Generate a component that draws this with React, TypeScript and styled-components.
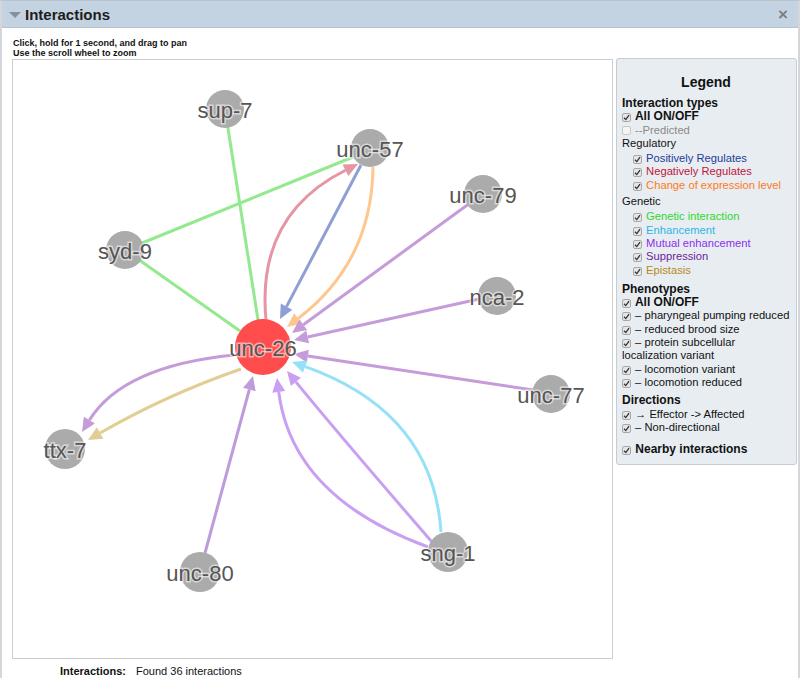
import React from 'react'
import styled, { createGlobalStyle } from 'styled-components'

const GlobalStyle = createGlobalStyle`
  body {
    margin: 0;
    font-family: 'Liberation Sans', Arial, sans-serif;
    color: #111;
  }
`

type Pt = [number, number]

interface GraphNode {
  id: string
  at: Pt
  r: number
  fill: string
}

interface GraphEdge {
  from: Pt
  to: Pt
  ctrl?: Pt
  color: string
  arrow?: boolean
}

const nodes: GraphNode[] = [
  { id: 'sup-7', at: [225, 109], r: 19, fill: '#ababab' },
  { id: 'unc-57', at: [370, 148], r: 19, fill: '#ababab' },
  { id: 'unc-79', at: [483, 194], r: 19, fill: '#ababab' },
  { id: 'syd-9', at: [125, 250], r: 19, fill: '#ababab' },
  { id: 'nca-2', at: [497, 296], r: 19, fill: '#ababab' },
  { id: 'unc-77', at: [551, 394], r: 19, fill: '#ababab' },
  { id: 'ttx-7', at: [65, 449], r: 20, fill: '#ababab' },
  { id: 'unc-80', at: [200, 572], r: 20, fill: '#ababab' },
  { id: 'sng-1', at: [448, 552], r: 20, fill: '#ababab' },
  { id: 'unc-26', at: [263, 347], r: 28, fill: '#ff4d4d' }
]

const edges: GraphEdge[] = [
  { from: [225, 109], to: [258, 320], color: '#93e98d' },
  { from: [125, 250], to: [240, 331], color: '#93e98d' },
  { from: [125, 250], to: [353, 157], color: '#93e98d' },
  { from: [266, 320], to: [358, 164], ctrl: [256, 215], color: '#e596a4', arrow: true },
  { from: [361, 165], to: [280, 319], color: '#8e9fd4', arrow: true },
  { from: [373, 167], to: [287, 327], ctrl: [372, 262], color: '#ffc68d', arrow: true },
  { from: [470, 203], to: [292, 333], color: '#c59cd9', arrow: true },
  { from: [479, 299], to: [294, 340], color: '#c59cd9', arrow: true },
  { from: [533, 390], to: [294, 354], color: '#c59cd9', arrow: true },
  { from: [441, 532], to: [292, 362], ctrl: [433, 412], color: '#95e1f7', arrow: true },
  { from: [432, 542], to: [287, 371], ctrl: [341, 437], color: '#c99ff2', arrow: true },
  { from: [428, 547], to: [277, 378], ctrl: [292, 497], color: '#c99ff2', arrow: true },
  { from: [205, 553], to: [253, 376], color: '#bd9cdb', arrow: true },
  { from: [234, 355], to: [82, 432], ctrl: [123, 366], color: '#c59cd9', arrow: true },
  { from: [241, 369], to: [88, 440], ctrl: [166, 395], color: '#e2cd92', arrow: true }
]

const arrowHead = (e: GraphEdge) => {
  const back = e.ctrl ?? e.from
  const dx = e.to[0] - back[0]
  const dy = e.to[1] - back[1]
  const len = Math.hypot(dx, dy)
  const ux = dx / len
  const uy = dy / len
  const bx = e.to[0] - ux * 14
  const by = e.to[1] - uy * 14
  const w = 6.5
  return {
    base: [bx, by] as Pt,
    points: `${e.to[0]},${e.to[1]} ${bx - uy * w},${by + ux * w} ${bx + uy * w},${by - ux * w}`
  }
}

const Graph = () => (
  <GraphSvg viewBox='13 60 599 598' width={599} height={598}>
    {edges.map((e, i) => {
      const head = e.arrow ? arrowHead(e) : null
      const end = head ? head.base : e.to
      const d = e.ctrl
        ? `M${e.from[0]},${e.from[1]} Q${e.ctrl[0]},${e.ctrl[1]} ${end[0]},${end[1]}`
        : `M${e.from[0]},${e.from[1]} L${end[0]},${end[1]}`
      return (
        <g key={i}>
          <path d={d} fill='none' stroke={e.color} strokeWidth={3} />
          {head && <polygon points={head.points} fill={e.color} />}
        </g>
      )
    })}
    {nodes.map(n => (
      <circle key={n.id} cx={n.at[0]} cy={n.at[1]} r={n.r} fill={n.fill} />
    ))}
    {nodes.map(n => (
      <NodeLabel
        key={n.id}
        x={n.at[0]}
        y={n.at[1] + 1}
        textAnchor='middle'
        dominantBaseline='central'
      >
        {n.id}
      </NodeLabel>
    ))}
  </GraphSvg>
)

const Check = ({ off }: { off?: boolean }) => (
  <CheckBox off={off}>
    {!off && (
      <svg width='7' height='7' viewBox='0 0 7 7'>
        <path d='M1 3.8 L2.8 5.6 L6 1.2' fill='none' stroke='#333' strokeWidth='1.3' />
      </svg>
    )}
  </CheckBox>
)

export default function App() {
  return (
    <>
      <GlobalStyle />
      <Panel>
        <Header>
          <Caret />
          <Title>Interactions</Title>
          <Close>×</Close>
        </Header>
        <Body>
          <Hint>
            Click, hold for 1 second, and drag to pan
            <br />
            Use the scroll wheel to zoom
          </Hint>
          <Main>
            <GraphBox>
              <Graph />
            </GraphBox>
            <Legend>
              <LegendTitle>Legend</LegendTitle>
              <Heading gap={6}>Interaction types</Heading>
              <Row strong>
                <Check /> All ON/OFF
              </Row>
              <Row color='#8a8a8a'>
                <Check off /> --Predicted
              </Row>
              <Row>Regulatory</Row>
              <Group>
                <Row indent color='#1f3c99'>
                  <Check /> Positively Regulates
                </Row>
                <Row indent color='#c0163c'>
                  <Check /> Negatively Regulates
                </Row>
                <Row indent color='#ff7a22'>
                  <Check /> Change of expression level
                </Row>
              </Group>
              <Row gap={3}>Genetic</Row>
              <Group>
                <Row indent color='#2ed82e'>
                  <Check /> Genetic interaction
                </Row>
                <Row indent color='#2cb5ea'>
                  <Check /> Enhancement
                </Row>
                <Row indent color='#8b2ff0'>
                  <Check /> Mutual enhancement
                </Row>
                <Row indent color='#6c1e9c'>
                  <Check /> Suppression
                </Row>
                <Row indent color='#b5891a'>
                  <Check /> Epistasis
                </Row>
              </Group>
              <Heading gap={6}>Phenotypes</Heading>
              <Row strong>
                <Check /> All ON/OFF
              </Row>
              <Row>
                <Check /> – pharyngeal pumping reduced
              </Row>
              <Row>
                <Check /> – reduced brood size
              </Row>
              <Row>
                <Check /> – protein subcellular localization variant
              </Row>
              <Row>
                <Check /> – locomotion variant
              </Row>
              <Row>
                <Check /> – locomotion reduced
              </Row>
              <Heading gap={5}>Directions</Heading>
              <Row>
                <Check /> → Effector -&gt; Affected
              </Row>
              <Row>
                <Check /> – Non-directional
              </Row>
              <Row strong gap={9}>
                <Check /> Nearby interactions
              </Row>
            </Legend>
          </Main>
          <Footer>
            <FooterLabel>Interactions:</FooterLabel>
            <span>Found 36 interactions</span>
          </Footer>
          <FooterRule />
        </Body>
      </Panel>
    </>
  )
}

const Panel = styled.div`
  width: 800px;
  height: 678px;
  box-sizing: border-box;
  border-left: 2px solid #d3d6da;
  border-right: 2px solid #d3d6da;
  border-top: 1px solid #b9c3cc;
  overflow: hidden;
  background: #fff;
`

const Header = styled.div`
  height: 26px;
  display: flex;
  align-items: center;
  padding: 0 10px 0 7px;
  background: #c4d3e1;
  border-bottom: 1px solid #b3c2cf;
`

const Caret = styled.span`
  width: 0;
  height: 0;
  border-left: 6px solid transparent;
  border-right: 6px solid transparent;
  border-top: 6px solid #8a8f95;
  margin-right: 4px;
  margin-top: 2px;
`

const Title = styled.div`
  font-size: 15px;
  font-weight: bold;
  color: #1d1d1d;
  flex: 1;
`

const Close = styled.div`
  font-size: 17px;
  font-weight: bold;
  color: #7a7f85;
  line-height: 1;
`

const Body = styled.div`
  padding: 10px 0 0 10px;
`

const Hint = styled.div`
  font-size: 9px;
  font-weight: bold;
  line-height: 10px;
  padding-left: 1px;
  color: #111;
`

const Main = styled.div`
  display: flex;
  align-items: flex-start;
  gap: 3px;
`

const GraphBox = styled.div`
  width: 599px;
  height: 598px;
  margin-top: 1px;
  border: 1px solid #cdcdcd;
  background: #fff;
`

const GraphSvg = styled.svg`
  display: block;
`

const NodeLabel = styled.text`
  font-family: 'Liberation Sans', Arial, sans-serif;
  font-size: 22px;
  fill: #555;
  stroke: #fff;
  stroke-width: 3px;
  stroke-opacity: 0.55;
  paint-order: stroke;
`

const Legend = styled.div`
  width: 168px;
  height: 391px;
  padding: 14px 6px 0 5px;
  border: 1px solid #c6ccd2;
  border-radius: 3px;
  background: #e8edf1;
  font-size: 11px;
  color: #111;
`

const LegendTitle = styled.div`
  font-size: 14px;
  font-weight: bold;
  line-height: 18px;
  text-align: center;
`

const Heading = styled.div<{ gap?: number }>`
  font-size: 12px;
  font-weight: bold;
  line-height: 13.3px;
  margin-top: ${p => p.gap ?? 0}px;
`

const Group = styled.div`
  margin-top: 2px;
`

const Row = styled.div<{ indent?: boolean; strong?: boolean; gap?: number; color?: string }>`
  line-height: 13.3px;
  padding-left: ${p => (p.indent ? 11 : 0)}px;
  margin-top: ${p => p.gap ?? 0}px;
  font-weight: ${p => (p.strong ? 'bold' : 'normal')};
  font-size: ${p => (p.strong ? 12 : 11.2)}px;
  color: ${p => p.color ?? '#111'};
`

const CheckBox = styled.span<{ off?: boolean }>`
  display: inline-flex;
  align-items: center;
  justify-content: center;
  box-sizing: border-box;
  width: 9px;
  height: 9px;
  margin-right: 1px;
  vertical-align: -1px;
  border: 1px solid ${p => (p.off ? '#c8c8c8' : '#a8a8a8')};
  border-radius: 2px;
  background: ${p => (p.off ? '#f4f4f4' : '#e6e6e6')};
`

const Footer = styled.div`
  display: flex;
  gap: 10px;
  padding-left: 48px;
  margin-top: 6px;
  font-size: 11px;
  line-height: 13px;
`

const FooterLabel = styled.span`
  font-weight: bold;
`

const FooterRule = styled.div`
  margin: 2px 0 0 126px;
  width: 648px;
  border-top: 1px solid #d2d2d2;
`
